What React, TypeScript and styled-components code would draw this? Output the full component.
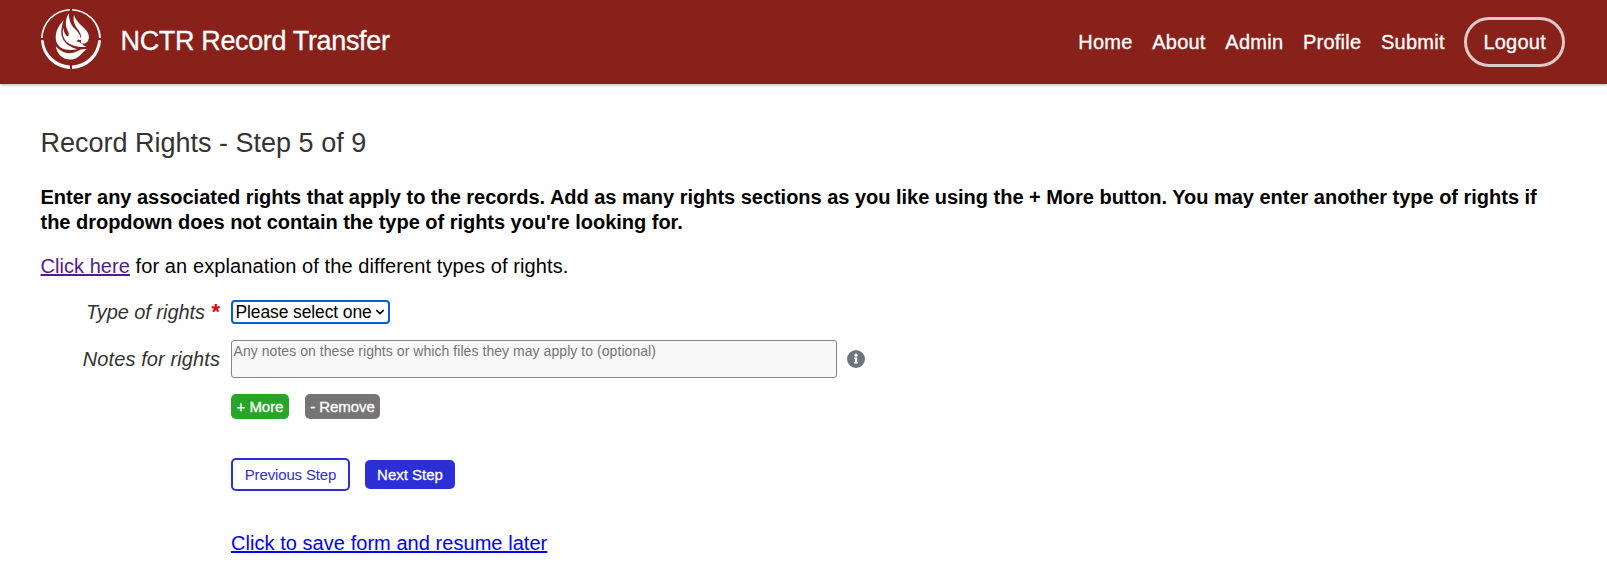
import React from "react";
import styled, { createGlobalStyle, css } from "styled-components";

const GlobalStyle = createGlobalStyle`
  *, *::before, *::after { box-sizing: border-box; }
  body {
    margin: 0;
    background: #fff;
    color: #000;
    font-family: "Liberation Sans", Arial, Helvetica, sans-serif;
    font-size: 20px;
    line-height: 25px;
  }
`;

const Header = styled.header`
  display: flex;
  align-items: center;
  justify-content: space-between;
  height: 84px;
  padding: 0 42px 0 40px;
  background: #88211a;
  color: #fff;
  box-shadow: 0 1px 3px rgba(0, 0, 0, 0.3);
`;

const Brand = styled.div`
  display: flex;
  align-items: center;
  gap: 18.5px;
  padding-bottom: 6px;
`;

const BrandName = styled.span`
  font-size: 27px;
  letter-spacing: -0.35px;
  line-height: 32px;
  padding-top: 4px;
  -webkit-text-stroke: 0.3px #fff;
`;

const Nav = styled.nav`
  display: flex;
  align-items: center;
  gap: 19.7px;
`;

const NavLink = styled.a<{ $outlined?: boolean }>`
  color: #fff;
  letter-spacing: 0.24px;
  text-decoration: none;
  -webkit-text-stroke: 0.3px #fff;
  ${(p) =>
    p.$outlined &&
    css`
      padding: 10px 16px 9px;
      border: 3px solid rgba(255, 255, 255, 0.75);
      border-radius: 25px;
    `}
`;

const Main = styled.main`
  padding: 43px 40px 0 40.5px;
`;

const Title = styled.h1`
  margin: 0 0 26px;
  color: #333;
  font-size: 27px;
  font-weight: 400;
  line-height: 32px;
`;

const Instructions = styled.p`
  margin: 0 0 19px;
  font-weight: 700;
  letter-spacing: -0.02px;
`;

const Explanation = styled.p`
  margin: 0 0 21px;
  letter-spacing: 0.1px;
`;

const Link = styled.a<{ $visited?: boolean }>`
  color: ${(p) => (p.$visited ? "#551a8b" : "#0000ff")};
  letter-spacing: 0.05px;
  text-decoration: underline;
  text-decoration-thickness: 2px;
`;

const Form = styled.form`
  display: grid;
  grid-template-columns: 179.5px auto;
  column-gap: 11px;
  justify-content: start;
`;

const Label = styled.label<{ $top?: number; $spacing?: number }>`
  align-self: center;
  justify-self: end;
  margin-top: ${(p) => p.$top ?? 0}px;
  color: #333;
  font-style: italic;
  letter-spacing: ${(p) => p.$spacing ?? 0}px;
`;

const Required = styled.span`
  margin-left: 6.5px;
  color: #d00;
  font-size: 22px;
  font-style: normal;
  font-weight: 700;
  line-height: 0;
`;

const Field = styled.div<{ $gap?: number; $top?: number; $align?: string }>`
  grid-column: 2;
  display: flex;
  align-items: ${(p) => p.$align ?? "center"};
  gap: ${(p) => p.$gap ?? 0}px;
  margin-top: ${(p) => p.$top ?? 0}px;
`;

const Select = styled.div`
  display: flex;
  align-items: center;
  justify-content: space-between;
  width: 159px;
  height: 24px;
  padding: 0 3px 0 2.5px;
  border: 2px solid #0a5fce;
  border-radius: 4px;
  font-size: 17.5px;
  letter-spacing: -0.12px;
  line-height: 20px;
  white-space: nowrap;
`;

const Notes = styled.textarea`
  display: block;
  width: 606px;
  height: 38px;
  padding: 2px 2px 2px 1.5px;
  border: 1px solid #858585;
  border-radius: 3px;
  background: #f8f8f8;
  font: 14px/17px "Liberation Sans", Arial, sans-serif;
  letter-spacing: 0.055px;
  resize: none;
  &::placeholder { color: #757575; }
`;

const SmallButton = styled.button<{ $color: string; $width: number }>`
  width: ${(p) => p.$width}px;
  height: 25px;
  padding: 0;
  border: 0;
  border-radius: 5px;
  background: ${(p) => p.$color};
  color: #fff;
  font: 15px/25px "Liberation Sans", Arial, sans-serif;
  letter-spacing: -0.05px;
  white-space: nowrap;
  -webkit-text-stroke: 0.3px #fff;
`;

const StepButton = styled.button<{ $primary?: boolean }>`
  width: ${(p) => (p.$primary ? 90 : 119)}px;
  height: ${(p) => (p.$primary ? 29 : 33)}px;
  padding: 0;
  border: ${(p) => (p.$primary ? "0" : "2px solid #2d2fd6")};
  border-radius: 5px;
  background: ${(p) => (p.$primary ? "#2d2fd6" : "#fff")};
  color: ${(p) => (p.$primary ? "#fff" : "#2d2fd6")};
  font: 15px/20px "Liberation Sans", Arial, sans-serif;
  letter-spacing: ${(p) => (p.$primary ? 0 : -0.14)}px;
  white-space: nowrap;
  -webkit-text-stroke: ${(p) => (p.$primary ? "0.3px #fff" : "0")};
`;

const Logo = () => (
  <svg width="62" height="62" viewBox="0 0 62 62" fill="#fff">
    <path d="M30 1A30 30 0 0 0 1 30H2.600A28.600 28.600 0 0 1 30 2.400Z" />
    <path d="M32 1A30 30 0 0 1 61 30H59A28 28 0 0 0 32 2.400Z" />
    <path d="M1 32.200A30 30 0 0 0 30 61V57.400A27.500 27.500 0 0 1 3.600 32.200Z" />
    <path d="M61 32.200A30 30 0 0 1 32 61V57.400A27.500 27.500 0 0 0 58.200 32.200Z" />
    <path d="M23.600 12.200C18.500 17.500 15.600 23.500 15.700 29.500C15.800 35 18.500 38.500 22.500 40.500C27 42.500 33 42 37.500 41.200C30.500 39.500 24.500 35.500 22.300 29.500C20.300 24 21.800 18 23.600 12.200Z" />
    <path d="M28.700 5.300C26.200 9.500 25.200 14.500 26.300 19C27.200 22.500 29.500 24.500 28.600 27.500C27.800 29.300 26.500 28 25 25.500C23.800 23.500 23.600 21.500 23.400 19.500C21.500 27 24 32.500 29 35.500C34 38.500 41 40 46.500 38.500C44 38 42.300 36.800 41.800 35.200C45.500 36.500 48.900 33.500 48.900 29C48.900 24.500 46 22 43 19C39 15 35.500 12 34 7C32.500 13 35 17.500 38 21.500C40.500 25 41.800 28 40.500 30.500C40.300 26 37.500 23.500 35 21C31.500 17.500 29.300 14.500 28.700 5.300Z" />
    <path d="M36.600 33.800C36.800 31.600 39.500 31.300 41.300 32.200C40.600 33.200 40.900 34.400 41.800 35.800C40 34.200 38.500 33.600 36.600 33.800Z" fill="#88211a" />
    <path d="M15.800 38C17 46.500 23 51.800 31 51.600C39 51.400 41.500 44.500 47 41C42.500 40.800 40 41.500 36.500 43.500C30 47 21 45 15.800 38Z" />
  </svg>
);

const InfoIcon = () => (
  <svg width="18" height="18" viewBox="0 0 18 18">
    <circle cx="9" cy="9" r="9" fill="#6c757d" />
    <circle cx="9" cy="5.200" r="1.600" fill="#fff" />
    <path d="M7 7.600H10.200V12H11.100V13.500H6.900V12H7.900V9.100H7Z" fill="#fff" />
  </svg>
);

const ChevronIcon = styled.svg`
  flex: none;
`;

const Chevron = () => (
  <ChevronIcon width="10" height="6" viewBox="0 0 10 6" fill="none" stroke="#000" strokeWidth="1.700">
    <path d="M1.200 1L5 4.600L8.800 1" />
  </ChevronIcon>
);

export default function App() {
  return (
    <>
      <GlobalStyle />
      <Header>
        <Brand>
          <Logo />
          <BrandName>NCTR Record Transfer</BrandName>
        </Brand>
        <Nav>
          <NavLink>Home</NavLink>
          <NavLink>About</NavLink>
          <NavLink>Admin</NavLink>
          <NavLink>Profile</NavLink>
          <NavLink>Submit</NavLink>
          <NavLink $outlined>Logout</NavLink>
        </Nav>
      </Header>
      <Main>
        <Title>Record Rights - Step 5 of 9</Title>
        <Instructions>
          Enter any associated rights that apply to the records. Add as many rights sections as you like using the + More
          button. You may enter another type of rights if the dropdown does not contain the type of rights you're looking
          for.
        </Instructions>
        <Explanation>
          <Link $visited>Click here</Link> for an explanation of the different types of rights.
        </Explanation>
        <Form>
          <Label $spacing={-0.05}>
            Type of rights<Required>*</Required>
          </Label>
          <Field $align="flex-start">
            <Select>
              Please select one
              <Chevron />
            </Select>
          </Field>
          <Label $top={16} $spacing={0.1}>Notes for rights</Label>
          <Field $gap={10} $top={15}>
            <Notes placeholder="Any notes on these rights or which files they may apply to (optional)" />
            <InfoIcon />
          </Field>
          <Field $gap={16} $top={16}>
            <SmallButton type="button" $color="#28a428" $width={58}>+ More</SmallButton>
            <SmallButton type="button" $color="#757575" $width={75}>- Remove</SmallButton>
          </Field>
          <Field $gap={15} $top={39}>
            <StepButton type="button">Previous Step</StepButton>
            <StepButton type="button" $primary>Next Step</StepButton>
          </Field>
          <Field $top={40}>
            <Link>Click to save form and resume later</Link>
          </Field>
        </Form>
      </Main>
    </>
  );
}
